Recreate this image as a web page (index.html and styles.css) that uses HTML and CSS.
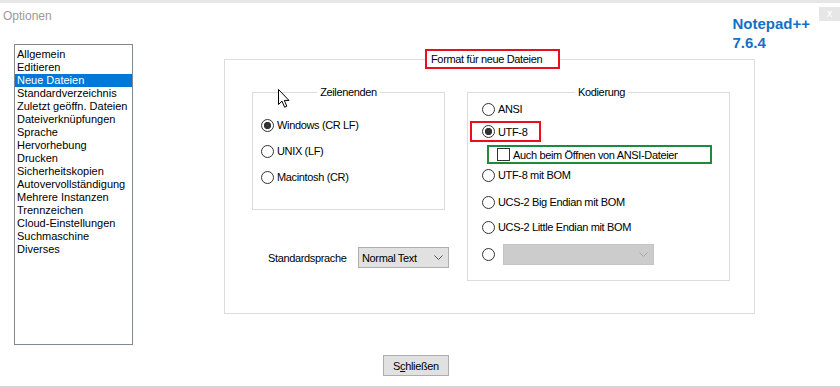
FILE: index.html
```html
<!DOCTYPE html>
<html lang="de">
<head>
    <meta charset="UTF-8">
    <title>Optionen</title>
    <link rel="stylesheet" href="styles.css">
</head>
<body>
    <div class="dialog">
        <header class="titlebar">
            <span class="title">Optionen</span>
            <div class="version">Notepad++<br>7.6.4</div>
            <span class="close">x</span>
        </header>

        <div class="main">
            <ul class="pages">
                <li>Allgemein</li>
                <li>Editieren</li>
                <li class="selected">Neue Dateien</li>
                <li>Standardverzeichnis</li>
                <li>Zuletzt geöffn. Dateien</li>
                <li>Dateiverknüpfungen</li>
                <li>Sprache</li>
                <li>Hervorhebung</li>
                <li>Drucken</li>
                <li>Sicherheitskopien</li>
                <li>Autovervollständigung</li>
                <li>Mehrere Instanzen</li>
                <li>Trennzeichen</li>
                <li>Cloud-Einstellungen</li>
                <li>Suchmaschine</li>
                <li>Diverses</li>
            </ul>

            <fieldset class="panel">
                <legend class="panel-title">Format für neue Dateien</legend>
                <div class="columns">
                    <div class="left-col">
                        <fieldset class="group eol">
                            <legend>Zeilenenden</legend>
                            <label class="option"><input type="radio" name="eol" checked>Windows (CR LF)</label>
                            <label class="option"><input type="radio" name="eol">UNIX (LF)</label>
                            <label class="option"><input type="radio" name="eol">Macintosh (CR)</label>
                        </fieldset>
                        <div class="lang-row">
                            <span class="lang-label">Standardsprache</span>
                            <div class="combo lang">
                                <span>Normal Text</span>
                                <svg width="9" height="5" viewBox="0 0 9 5"><polyline points="0.5,0.5 4.5,4.5 8.5,0.5" fill="none" stroke="#555" stroke-width="1"/></svg>
                            </div>
                        </div>
                    </div>

                    <fieldset class="group encoding">
                        <legend>Kodierung</legend>
                        <label class="option"><input type="radio" name="enc">ANSI</label>
                        <label class="option mark-red"><input type="radio" name="enc" checked>UTF-8</label>
                        <label class="check mark-green"><input type="checkbox"><span>Auch beim Öffnen von ANSI-Dateien</span></label>
                        <label class="option bom"><input type="radio" name="enc">UTF-8 mit BOM</label>
                        <label class="option big"><input type="radio" name="enc">UCS-2 Big Endian mit BOM</label>
                        <label class="option little"><input type="radio" name="enc">UCS-2 Little Endian mit BOM</label>
                        <div class="option other">
                            <input type="radio" name="enc">
                            <div class="combo disabled">
                                <span></span>
                                <svg width="9" height="5" viewBox="0 0 9 5"><polyline points="0.5,0.5 4.5,4.5 8.5,0.5" fill="none" stroke="#a8a8a8" stroke-width="1"/></svg>
                            </div>
                        </div>
                    </fieldset>
                </div>
            </fieldset>
        </div>

        <div class="footer">
            <button type="button">S<u>c</u>hließen</button>
        </div>
    </div>

    <!-- mouse pointer -->
    <svg class="cursor" width="13" height="20" viewBox="0 0 13 20">
        <path d="M0.5 0.5 L0.5 15.5 L4 12.2 L6.6 18.2 L8.8 17.2 L6.3 11.4 L11 11.4 Z" fill="#fff" stroke="#000" stroke-width="1" stroke-linejoin="round"/>
    </svg>
</body>
</html>
```

FILE: styles.css
```css
body {
    margin: 0;
    font-family: "Liberation Sans", Arial, sans-serif;
    background: #fff;
    color: #000;
}

.dialog {
    height: 388px;
    box-sizing: border-box;
    border-top: 3px solid #e6e6e6;
    border-bottom: 2px solid #d6d6d6;
}

.titlebar {
    display: flex;
    align-items: flex-start;
    height: 41px;
    padding-left: 3px;
}

.title {
    margin-top: 6px;
    font-size: 12px;
    line-height: 14px;
    color: #9a9a9a;
}

.version {
    margin-left: auto;
    margin-top: 11px;
    font-size: 15px;
    font-weight: bold;
    line-height: 19px;
    color: #1570c5;
}

.close {
    margin-left: 9px;
    margin-top: 4px;
    width: 21px;
    height: 14px;
    background: #e6e6e6;
    color: #fff;
    font-size: 11px;
    line-height: 12px;
    text-align: center;
}

.main {
    display: flex;
    align-items: flex-start;
    padding-left: 14px;
}

.pages {
    list-style: none;
    margin: 0;
    padding: 3px 0 0;
    width: 119px;
    height: 301px;
    box-sizing: border-box;
    border: 1px solid #828790;
    font-size: 11px;
    line-height: 13px;
}

.pages li {
    padding-left: 2px;
    white-space: nowrap;
}

.pages .selected {
    background: #0078d7;
    color: #fff;
}

.panel {
    margin: 5px 0 0 91px;
    padding: 16px 24px 32px 27px;
    border: 1px solid #dcdcdc;
    width: 531px;
    box-sizing: border-box;
    min-width: 0;
}

.panel-title {
    box-sizing: border-box;
    width: 135px;
    height: 20px;
    margin-left: 173px;
    padding: 0 0 0 4px;
    border: 2px solid #e8101a;
    font-size: 11px;
    line-height: 16px;
    letter-spacing: -0.35px;
    background: #fff;
}

.columns {
    display: flex;
    align-items: flex-start;
    gap: 22px;
}

.left-col {
    flex: none;
    width: 193px;
}

.group {
    margin: 0;
    border: 1px solid #dcdcdc;
    min-width: 0;
    box-sizing: border-box;
}

.group legend {
    margin: 0 auto;
    padding: 0 3px;
    font-size: 11px;
    line-height: 14px;
    letter-spacing: -0.35px;
}

.eol {
    width: 193px;
    padding: 16px 8px 22px;
}

.eol .option + .option {
    margin-top: 6px;
}

.encoding {
    flex: none;
    width: 263px;
    padding: 0 8px 15px 14px;
}

.option {
    display: flex;
    align-items: center;
    gap: 3px;
    height: 20px;
    font-size: 11px;
    letter-spacing: -0.35px;
    white-space: nowrap;
}

input[type="radio"] {
    appearance: none;
    -webkit-appearance: none;
    flex: none;
    width: 13px;
    height: 13px;
    margin: 0;
    border: 1px solid #333;
    border-radius: 50%;
    background: #fff;
}

input[type="radio"]:checked {
    background: radial-gradient(circle, #333 0 3.4px, #fff 3.9px);
}

input[type="checkbox"] {
    appearance: none;
    -webkit-appearance: none;
    flex: none;
    width: 13px;
    height: 13px;
    margin: 0;
    border: 1px solid #333;
    background: #fff;
}

.mark-red {
    box-sizing: border-box;
    width: 71px;
    height: 21px;
    margin: 2px 0 0 -12px;
    padding-left: 10px;
    border: 2px solid #e8101a;
}

.mark-green {
    display: flex;
    align-items: center;
    gap: 3px;
    box-sizing: border-box;
    width: 225px;
    height: 19px;
    margin: 3px 0 0 5px;
    padding-left: 8px;
    border: 2px solid #1f8a3b;
    font-size: 11px;
    letter-spacing: -0.35px;
}

/* the control is narrower than its caption, as in the original dialog */
.mark-green span {
    width: 165px;
    overflow: hidden;
    white-space: nowrap;
}

.bom {
    margin-top: 1px;
}

.big {
    margin-top: 7px;
}

.little {
    margin-top: 5px;
}

.other {
    height: 21px;
    margin-top: 7px;
    gap: 8px;
}

.combo {
    display: flex;
    align-items: center;
    justify-content: space-between;
    box-sizing: border-box;
    height: 21px;
    padding: 0 5px 0 3px;
    border: 1px solid #adadad;
    background: #e1e1e1;
    font-size: 11px;
    letter-spacing: -0.35px;
}

.combo.lang {
    flex: none;
    width: 91px;
}

.combo.disabled {
    width: 151px;
    border-color: #c4c4c4;
    background: #cccccc;
}

.lang-row {
    display: flex;
    align-items: center;
    gap: 8px;
    margin: 37px 0 0 16px;
    font-size: 11px;
    letter-spacing: -0.35px;
}

.lang-label {
    flex: none;
    width: 82px;
}

.footer {
    padding: 10px 0 0 383px;
}

.footer button {
    box-sizing: border-box;
    width: 66px;
    height: 21px;
    padding: 0;
    border: 1px solid #adadad;
    background: #e1e1e1;
    font-family: "Liberation Sans", Arial, sans-serif;
    font-size: 11px;
    letter-spacing: -0.35px;
    color: #000;
}

.cursor {
    position: absolute;
    left: 278px;
    top: 89px;
}
```
